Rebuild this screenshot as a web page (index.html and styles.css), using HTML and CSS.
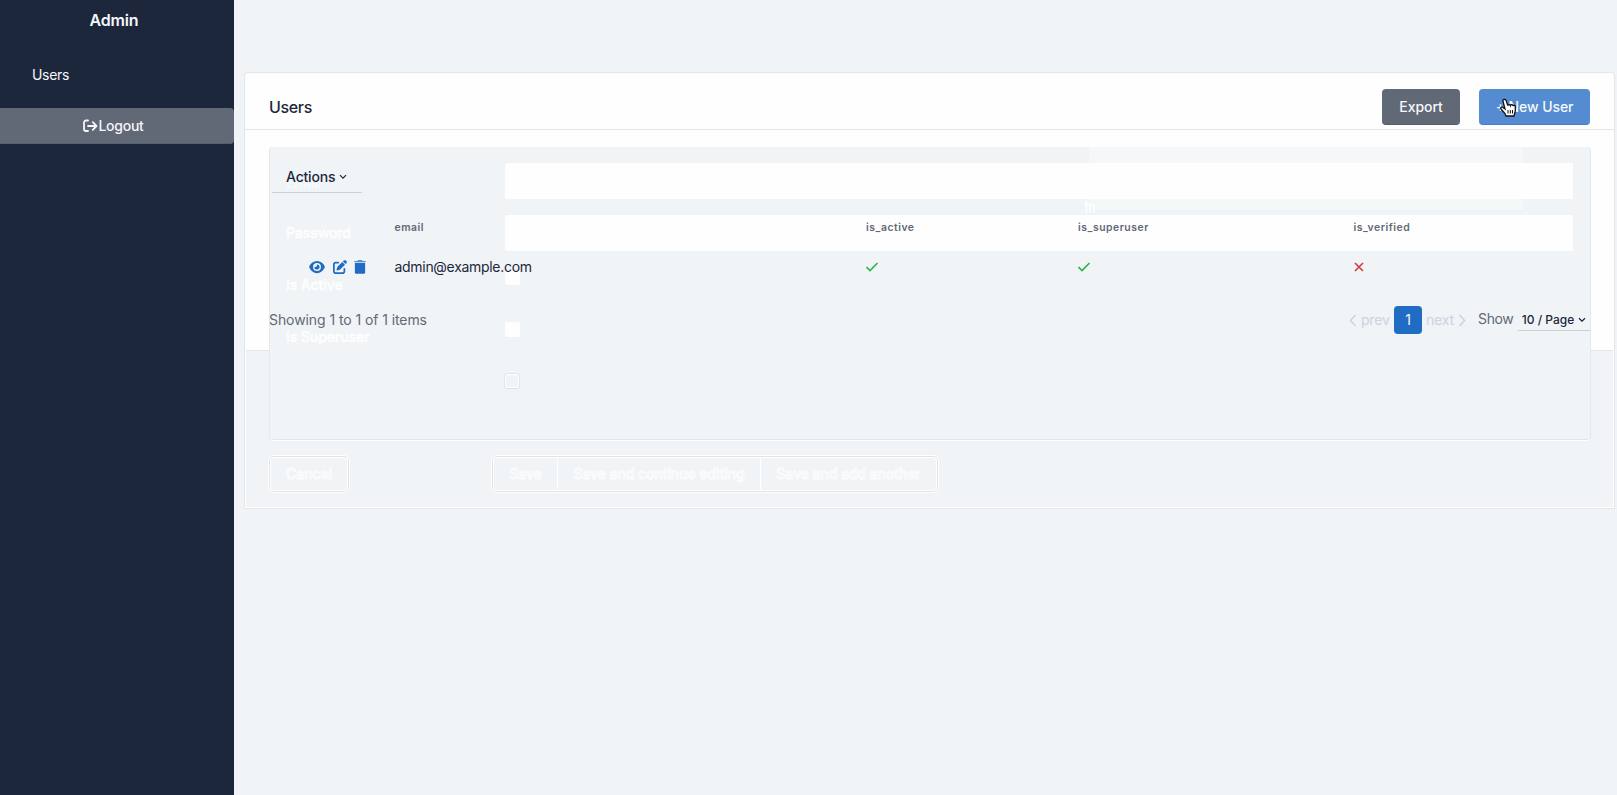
FILE: index.html
```html
<!DOCTYPE html>
<html lang="en">
<head>
<meta charset="utf-8">
<title>Admin - Users</title>
<link rel="stylesheet" href="styles.css">
</head>
<body>
<aside class="sidebar">
  <h1 class="brand">Admin</h1>
  <a class="nav-link">Users</a>
  <a class="logout"><svg width="15" height="14" viewBox="0 0 15 14"><path d="M5 1.500H3A2 2 0 0 0 1 3.500v6.500a2 2 0 0 0 2 2h2M5 7h8.500M9.800 3.200 13.500 7l-3.700 3.800" fill="none" stroke="currentColor" stroke-width="1.800" stroke-linecap="round" stroke-linejoin="round"/></svg>Logout</a>
</aside>
<main class="content">
  <section class="card">
    <header class="card-header">
      <h2 class="title">Users</h2>
      <a class="btn btn-export">Export</a>
      <a class="btn btn-new"><span>+ New User</span>
        <svg class="cursor" width="18" height="20" viewBox="0 0 18 20"><path d="M5.800 1.500C4.600 1 3.700 2 4 3.200L6 11 3.500 9.300C2.300 8.600 1 9.800 2 11l4 4.500 1 2.500h8l1.300-5V8.500c0-1.300-1.800-1.700-2.300-.5-.1-1.500-2.200-1.800-2.600-.5-.4-1.300-2.400-1.200-2.600.1L7.200 2.600c-.2-.6-.7-1-1.400-1.100z" fill="#fff" stroke="#111" stroke-width="1.300"/><path d="M9 12v3.500M11.300 12v3.500M13.500 12v3.500" stroke="#111"/></svg>
      </a>
    </header>
    <div class="card-body">
      <div class="form-layer">
        <div class="fieldset">
          <div class="sheen"><svg width="12" height="14" viewBox="0 0 12 14"><path d="M0 4h5M2.500 1v12M6 4v9M10 5v8M6 5h4" fill="none" stroke="#fff" stroke-width="1.500"/></svg></div>
          <div class="field"><span class="label faint">Email</span><i class="input"></i></div>
          <div class="field"><span class="label">Password</span><i class="input"></i></div>
          <div class="field"><span class="label">Is Active</span><i class="check"></i></div>
          <div class="field"><span class="label">Is Superuser</span><i class="check"></i></div>
          <div class="field"><span class="label"></span><i class="check open"></i></div>
        </div>
        <div class="form-actions">
          <span class="ghost-btn cancel">Cancel</span>
          <div class="ghost-group"><span class="ghost-btn save">Save</span><span class="ghost-btn continue">Save and continue editing</span><span class="ghost-btn another">Save and add another</span></div>
        </div>
      </div>
      <div class="list-layer">
        <a class="actions"><span>Actions</span><svg width="8" height="6" viewBox="0 0 8 6"><path d="M1 1.200l3 3 3-3" fill="none" stroke="currentColor" stroke-width="1.200"/></svg></a>
        <div class="row head"><span></span><span>email</span><span>is_active</span><span>is_superuser</span><span>is_verified</span></div>
        <div class="row item">
          <span class="tools">
            <svg width="16" height="14" viewBox="0 0 576 512"><path fill="currentColor" d="M288 32c-80.800 0-145.500 36.800-192.600 80.600C48.600 156 17.300 208 2.500 243.700c-3.300 7.900-3.300 16.700 0 24.600C17.300 304 48.600 356 95.400 399.400C142.500 443.200 207.200 480 288 480s145.500-36.800 192.600-80.600c46.800-43.500 78.100-95.400 93-131.100c3.300-7.900 3.300-16.700 0-24.600c-14.900-35.700-46.200-87.700-93-131.100C433.500 68.800 368.800 32 288 32zM144 256a144 144 0 1 1 288 0 144 144 0 1 1-288 0zm144-64c0 35.300-28.700 64-64 64c-7.100 0-13.900-1.200-20.300-3.300c-5.500-1.800-11.900 1.600-11.700 7.400c.3 6.900 1.300 13.800 3.200 20.700c13.700 51.200 66.400 81.600 117.600 67.900s81.600-66.400 67.900-117.600c-11.100-41.500-47.800-69.400-88.600-71.100c-5.800-.2-9.200 6.100-7.400 11.700c2.100 6.400 3.300 13.200 3.300 20.300z"/></svg>
            <svg width="14" height="14" viewBox="0 0 512 512"><path fill="currentColor" d="M471.600 21.700c-21.900-21.900-57.300-21.900-79.200 0L362.300 51.700l97.900 97.900 30.100-30.100c21.900-21.900 21.900-57.300 0-79.200L471.600 21.700zM172.400 241.700c-6.100 6.100-10.800 13.600-13.500 21.900l-29.600 88.800c-2.900 8.600-.6 18.100 5.800 24.600s15.900 8.700 24.600 5.800l88.800-29.600c8.200-2.700 15.700-7.400 21.900-13.500L437.700 172.300 339.700 74.300 172.400 241.700zM96 64C43 64 0 107 0 160V416c0 53 43 96 96 96H352c53 0 96-43 96-96V320c0-17.700-14.300-32-32-32s-32 14.300-32 32v96c0 17.700-14.300 32-32 32H96c-17.700 0-32-14.300-32-32V160c0-17.700 14.300-32 32-32h96c17.700 0 32-14.300 32-32s-14.300-32-32-32H96z"/></svg>
            <svg width="12" height="14" viewBox="0 0 448 512"><path fill="currentColor" d="M135.200 17.700L128 32H32C14.300 32 0 46.300 0 64H448c0-17.700-14.300-32-32-32H320l-7.200-14.300C307.400 6.800 296.300 0 284.200 0H163.800c-12.100 0-23.200 6.800-28.600 17.700zM416 100H32V464c0 28 20 48 48 48H368c28 0 48-20 48-48z"/></svg>
          </span>
          <span class="mail">admin@example.com</span>
          <span><svg class="yes" width="13" height="10" viewBox="0 0 13 10"><path d="M.5 5L4 8.500 11.500 1" fill="none" stroke="currentColor" stroke-width="1.600"/></svg></span>
          <span><svg class="yes" width="13" height="10" viewBox="0 0 13 10"><path d="M.5 5L4 8.500 11.500 1" fill="none" stroke="currentColor" stroke-width="1.600"/></svg></span>
          <span><svg class="no" width="10" height="10" viewBox="0 0 10 10"><path d="M1 1l8 8M9 1L1 9" fill="none" stroke="currentColor" stroke-width="1.600"/></svg></span>
        </div>
        <footer class="pager">
          <span class="summary">Showing 1 to 1 of 1 items</span>
          <svg class="prev-icon" width="8" height="13" viewBox="0 0 8 13"><path d="M6.500 1L1.500 6.500l5 5.500" fill="none" stroke="currentColor" stroke-width="1.500"/></svg>
          <span class="prev">prev</span>
          <b class="page">1</b>
          <span class="next">next</span>
          <svg class="next-icon" width="8" height="13" viewBox="0 0 8 13"><path d="M1.500 1l5 5.500-5 5.500" fill="none" stroke="currentColor" stroke-width="1.500"/></svg>
          <span class="show">Show</span>
          <span class="size"><span>10 / Page</span><svg width="8" height="6" viewBox="0 0 8 6"><path d="M1 1.200l3 3 3-3" fill="none" stroke="currentColor" stroke-width="1.300"/></svg></span>
        </footer>
      </div>
    </div>
  </section>
</main>
</body>
</html>
```
FILE: styles.css
```css
* { box-sizing: border-box; }
body {
  margin: 0;
  height: 795px;
  display: flex;
  overflow: hidden;
  background: #f0f4f7;
  color: #1d273b;
  font: 14px/20px Inter, "Liberation Sans", sans-serif;
  letter-spacing: -.08px;
}
svg { display: block; flex: none; }
.sidebar { width: 234px; background: #1d273b; color: #f4f6fa; }
.brand { margin: 0; padding: 10px 6px 0 0; text-align: center; font-size: 16px; line-height: 20px; font-weight: 600; letter-spacing: -.2px; }
.nav-link { display: block; padding: 35px 0 0 32px; height: 78px; letter-spacing: -.3px; }
.logout {
  display: flex; align-items: center; justify-content: center;
  height: 36px; padding: 1px 7px 0 0; background: #626976;
  border-bottom: 1px solid #586070; border-radius: 0 4px 4px 0; font-weight: 500; letter-spacing: -.25px;
}
.content { flex: 1; padding: 72px 2px 0 10px; }
.card { height: 437px; border: 1px solid #e4e6e9; border-radius: 4px 4px 0 0; background: #fefefe; }
.card-header { display: flex; align-items: center; height: 57px; padding: 12px 24px 0; border-bottom: 1px solid #e4e6e9; }
.title { margin: 0 auto 0 0; font-size: 16px; font-weight: 500; line-height: 24px; padding-bottom: 1px; letter-spacing: -.35px; }
.btn {
  display: flex; align-items: center; justify-content: center;
  height: 36px; border-radius: 4px; color: #f6f8fb; font-weight: 500;
}
.btn-export { width: 78px; margin-right: 19px; background: #626976; border-bottom: 1px solid #555d6b; }
.btn-new { position: relative; width: 111px; background: #548bd1; border-bottom: 1px solid #4a7fc7; }
.cursor { position: absolute; left: 20px; top: 9px; }
.card-body { position: relative; height: 378px; }

/* Form shown beneath the list */
.form-layer {
  position: absolute; inset: 0; padding: 17px 23px 0 24px;
  background: linear-gradient(#fefefe 220px, #e4e6e9 220px 221px, #f0f4f7 221px);
  border: solid #fefefe; border-width: 0 1px 1px;
}
.fieldset {
  position: relative; display: flex; flex-direction: column; gap: 16px;
  height: 293px; padding: 16px 17px 0 16px;
  background: #f0f4f7; border-bottom: 1px solid #e1e4e8; border-radius: 4px;
  box-shadow: 0 1px #fefefe, -1px 0 #e6e9ec, 1px 0 #e6e9ec;
}
.sheen { position: absolute; left: 819px; top: 0; width: 434px; height: 66px; padding-top: 53px; background: #f4f8f9; border-bottom: 3px solid #eff3f8; }
.sheen svg { margin-left: -5px; }
.field { position: relative; display: flex; height: 36px; }
.label { width: 219px; padding-top: 8px; font-weight: 500; color: #fdfefe; -webkit-text-stroke: .5px #fdfefe; }
.faint { padding-top: 10px; color: #f7fafb; -webkit-text-stroke: 0; }
.input { flex: 1; background: #fefefe; border-radius: 2px 0 0 2px; }
.check { width: 15px; height: 15px; margin-top: 3px; background: #fefefe; border-radius: 2px; }
.open { width: 14px; height: 14px; background: none; border: 1px solid #fff; box-shadow: 0 0 0 1px #e2e5e8; border-radius: 3px; }
.form-actions { display: flex; gap: 145px; padding-top: 17px; }
.ghost-btn {
  display: flex; align-items: center; justify-content: center; height: 34px;
  color: #f0f4f7; -webkit-text-stroke: 1px #fbfcfd; font-weight: 500;
}
.cancel, .ghost-group { border: 1px solid #fff; border-radius: 4px; box-shadow: 0 0 0 1px #e1e4e7, 0 0 0 2px #fff; }
.cancel { width: 78px; }
.ghost-group { display: flex; height: 34px; }
.ghost-group .ghost-btn { height: 32px; }
.save { width: 64px; border-right: 1px solid #fff; }
.continue { width: 203px; border-right: 1px solid #fff; }
.another { width: 175px; }

.list-layer { position: relative; padding: 30px 24px 0; }
.actions {
  display: flex; align-items: center; gap: 4px;
  width: 90px; height: 33px; margin-left: 3px; padding: 1px 0 0 14px;
  border-bottom: 1px solid #cbd1d9; font-weight: 500; letter-spacing: -.18px;
}
.row { display: grid; grid-template-columns: 125.500px 471.500px 212px 275.500px 1fr; align-items: center; }
.head { height: 37px; margin-top: 16px; color: #626976; font-size: 10.400px; font-weight: 600; letter-spacing: .53px; }
.item { height: 42px; }
.mail { letter-spacing: -.3px; }
.tools { display: flex; gap: 7.500px; padding-left: 40px; color: #206bc4; }
.yes { color: #2fb344; }
.no { color: #d63939; }
.pager { display: flex; align-items: center; height: 28px; margin-top: 18px; color: #626976; }
.summary { margin-right: auto; }
.prev, .next, .prev-icon, .next-icon { color: #cbd2e0; }
.prev { width: 33px; margin-left: 4px; letter-spacing: -.2px; }
.page { width: 28px; border-radius: 4px; background: #206bc4; color: #f6f9fc; line-height: 28px; text-align: center; font-weight: 400; }
.next { width: 32px; margin-left: 4px; letter-spacing: -.2px; }
.show { width: 40px; margin-left: 12px; padding-bottom: 2px; letter-spacing: -.35px; }
.size {
  display: flex; align-items: center; justify-content: center; gap: 4px;
  width: 72px; height: 21px; padding-top: 1px; border-bottom: 1px solid #cbd1d9;
  color: #1d273b; font-size: 12px; font-weight: 500; letter-spacing: 0;
}
```
